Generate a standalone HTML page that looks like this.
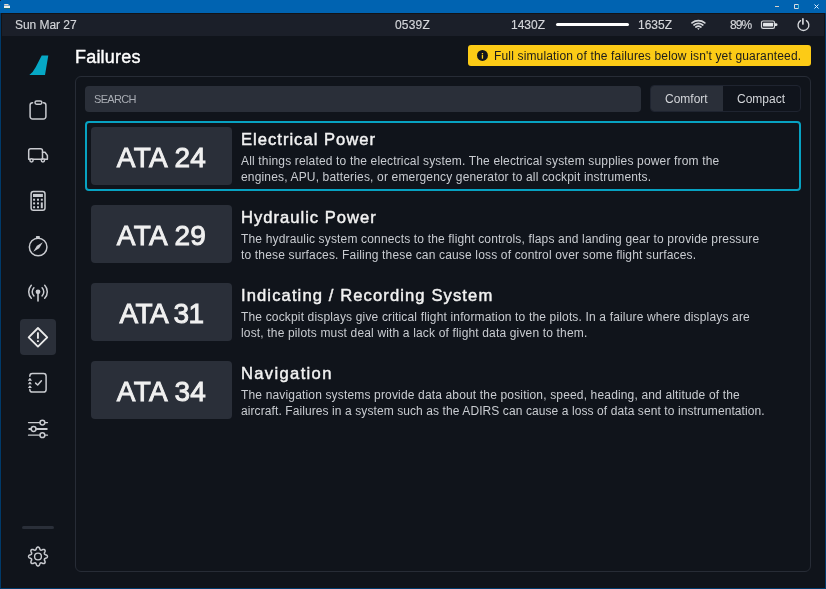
<!DOCTYPE html>
<html><head><meta charset="utf-8">
<style>
*{margin:0;padding:0;box-sizing:border-box}
html,body{width:826px;height:589px;overflow:hidden;background:#003a6a;font-family:"Liberation Sans",sans-serif}
.abs{position:absolute}
.st,#title,#banner span,#search span,#seg span,.ata,.ttl,.dsc{will-change:transform}
#tb{position:absolute;left:0;top:0;width:826px;height:13px;background:#0063b1}
#frame{position:absolute;left:1px;top:13px;width:824px;height:575px;background:#121317}
#app{position:absolute;left:2px;top:14px;width:822px;height:573px;background:#10141b}
#status{position:absolute;left:2px;top:14px;width:822px;height:22px;background:#1b1f29}
.st{position:absolute;top:14px;height:23px;line-height:23px;font-size:12px;color:#d4d6da;-webkit-text-stroke:0.15px #d4d6da;white-space:nowrap}
.ico{position:absolute;overflow:visible}
#title{position:absolute;left:75px;top:45px;font-size:18px;line-height:24px;color:#fff;-webkit-text-stroke:0.4px #fff;letter-spacing:0.2px;white-space:nowrap}
#banner{position:absolute;left:468px;top:45px;width:343px;height:21px;background:#fccb16;border-radius:3px}
#banner span{position:absolute;left:25.5px;top:0;line-height:22.5px;font-size:12px;color:#1b1b1b;letter-spacing:0.16px;white-space:nowrap}
#panel{position:absolute;left:75px;top:76px;width:736px;height:496px;border:1px solid #272c36;border-radius:6px}
#search{position:absolute;left:85px;top:86px;width:556px;height:26px;background:#2a2f39;border-radius:4px}
#search span{position:absolute;left:8.5px;top:0;line-height:26px;font-size:11px;color:#a9adb4;letter-spacing:-0.7px;white-space:nowrap}
#seg{position:absolute;left:650px;top:85px;width:150.5px;height:26.5px;border:1px solid #1f2430;border-radius:4px;background:#10141c;overflow:hidden}
#seg .c1{position:absolute;left:0;top:0;width:72px;height:100%;background:#2a2f39}
#seg span{position:absolute;top:0;line-height:27px;font-size:12px;color:#d3d5d9;white-space:nowrap}
.card{position:absolute;left:85px;width:715.5px;height:70px;border-radius:4px}
.card.sel{border:2px solid #07a2c2}
.ata{position:absolute;left:91px;width:141px;height:57.7px;background:#2a2f39;border-radius:4px;color:#f0f0f0;font-size:28px;font-weight:400;-webkit-text-stroke:0.9px #f0f0f0;letter-spacing:0.3px;text-align:center;line-height:61px;overflow:hidden;white-space:nowrap}
.ttl{position:absolute;left:240.5px;font-size:16.6px;font-weight:400;-webkit-text-stroke:0.45px #f2f2f2;letter-spacing:1.0px;color:#f2f2f2;white-space:nowrap;line-height:20px}
.dsc{position:absolute;left:241px;font-size:12px;color:#c9ccd1;letter-spacing:0.16px;white-space:nowrap;line-height:16px}
</style></head>
<body>
<div id="tb"></div>
<!-- title bar icons -->
<svg class="ico" style="left:0;top:0" width="826" height="13">
  <rect x="0" y="0" width="1" height="1" fill="#1a2030"/><rect x="4.2" y="4" width="4.3" height="1.2" fill="#e8ddd0"/><rect x="4" y="5.6" width="6" height="2.4" fill="#f2eee8"/><rect x="4" y="8" width="6" height="0.7" fill="#1f6a58"/>
  <line x1="775" y1="6.5" x2="779" y2="6.5" stroke="#d8d0c8" stroke-width="1"/>
  <path d="M798.5,4.5 H794.5 V8.5 H798.5" fill="none" stroke="#d8dde2" stroke-width="1"/><path d="M798.5,5 V8" stroke="#40c8d8" stroke-width="1"/>
  <path d="M814.5 4.5 L818.5 8.5 M818.5 4.5 L814.5 8.5" stroke="#e0f0ff" stroke-width="1"/>
</svg>
<div id="frame"></div>
<div id="app"></div>
<div id="status"></div>
<div class="st" style="left:15px;letter-spacing:-0.05px">Sun Mar 27</div>
<div class="st" style="left:394.5px;letter-spacing:0.2px">0539Z</div>
<div class="st" style="left:510.5px">1430Z</div>
<div class="abs" style="left:555.5px;top:23px;width:73.5px;height:3px;border-radius:2px;background:#fff"></div>
<div class="st" style="left:637.5px">1635Z</div>
<div class="st" style="left:729.5px;letter-spacing:-0.9px">89%</div>

<div id="title">Failures</div>
<div id="banner"><span>Full simulation of the failures below isn't yet guaranteed.</span></div>
<div id="panel"></div>
<div id="search"><span>SEARCH</span></div>
<div id="seg"><div class="c1"></div><span style="left:14px">Comfort</span><span style="left:86px">Compact</span></div>

<div class="card sel" style="top:121px"></div>
<div class="ata" style="top:127px">ATA 24</div>
<div class="ttl" style="top:129.5px">Electrical Power</div>
<div class="dsc" style="top:153px">All things related to the electrical system. The electrical system supplies power from the</div>
<div class="dsc" style="top:169px">engines, APU, batteries, or emergency generator to all cockpit instruments.</div>

<div class="ata" style="top:205px">ATA 29</div>
<div class="ttl" style="top:207.5px">Hydraulic Power</div>
<div class="dsc" style="top:231px">The hydraulic system connects to the flight controls, flaps and landing gear to provide pressure</div>
<div class="dsc" style="top:247px">to these surfaces. Failing these can cause loss of control over some flight surfaces.</div>

<div class="ata" style="top:283px;letter-spacing:-0.6px">ATA 31</div>
<div class="ttl" style="top:285.5px;letter-spacing:1.1px">Indicating / Recording System</div>
<div class="dsc" style="top:309px">The cockpit displays give critical flight information to the pilots. In a failure where displays are</div>
<div class="dsc" style="top:325px">lost, the pilots must deal with a lack of flight data given to them.</div>

<div class="ata" style="top:361px">ATA 34</div>
<div class="ttl" style="top:363.5px;letter-spacing:1.33px">Navigation</div>
<div class="dsc" style="top:387px">The navigation systems provide data about the position, speed, heading, and altitude of the</div>
<div class="dsc" style="top:403px;letter-spacing:0.09px">aircraft. Failures in a system such as the ADIRS can cause a loss of data sent to instrumentation.</div>

<!-- sidebar -->
<div class="abs" style="left:20px;top:319px;width:36px;height:36px;border-radius:4px;background:#2a2f39"></div>
<div class="abs" style="left:22px;top:526px;width:32px;height:3px;border-radius:2px;background:#2a2f39"></div>
<svg class="ico" style="left:0;top:0" width="826" height="589" viewBox="0 0 826 589">
<g fill="none" stroke="#c9cbd0" stroke-width="1.5" stroke-linecap="round" stroke-linejoin="round">
 <!-- clipboard -->
 <path d="M32.6,102.7 H32.6 a2.5,2.5 0 0 0 -2.5,2.5 V116.5 a2.5,2.5 0 0 0 2.5,2.5 H43.4 a2.5,2.5 0 0 0 2.5,-2.5 V105.2 a2.5,2.5 0 0 0 -2.5,-2.5 H43.4"/>
 <rect x="35" y="101" width="6.9" height="3.2" rx="1.6"/>
 <!-- truck -->
 <path d="M29.9,159.3 H28.7 V150.7 a2,2 0 0 1 2,-2 H40.5 a2,2 0 0 1 2,2 V159.3"/>
 <path d="M42.5,152.3 H45 L47.4,155.5 V159.3 H44.5"/>
 <path d="M33.1,159.3 H41.3"/>
 <circle cx="31.5" cy="160.3" r="1.6"/>
 <circle cx="42.9" cy="160.3" r="1.6"/>
 <!-- calculator -->
 <rect x="31.1" y="191.6" width="13.9" height="18.6" rx="2.3"/>
 <!-- compass -->
 <circle cx="38.15" cy="247" r="8.8"/>
 <!-- antenna arcs -->
 <path d="M33.9,287.7 A5.8,5.8 0 0 0 33.9,295.9 M42.1,287.7 A5.8,5.8 0 0 1 42.1,295.9"/>
 <path d="M31.3,285.35 A9.3,9.3 0 0 0 31.3,298.25 M44.7,285.35 A9.3,9.3 0 0 1 44.7,298.25"/>
 <path d="M38,292 V301" stroke-width="1.6"/>
 <!-- checklist -->
 <path d="M29.8,376.2 V376.2 a2.6,2.6 0 0 1 2.6,-2.6 H43.5 a2.6,2.6 0 0 1 2.6,2.6 V389.5 a2.6,2.6 0 0 1 -2.6,2.6 H32.4 a2.6,2.6 0 0 1 -2.6,-2.6"/>
 <path d="M35.6,383.1 L37.7,385 L41.4,380.8" stroke-width="1.5"/>
 <!-- sliders -->
 <path d="M28.5,422.6 H39.9 M44.9,422.6 H47.5 M28.5,435.2 H39.9 M44.9,435.2 H47.5" stroke-width="1.3"/><path d="M28.5,429 H31.1 M36.1,429 H47.5" stroke-width="1.9" stroke-linecap="butt"/>
 <circle cx="42.4" cy="422.6" r="2.4"/>
 <circle cx="33.6" cy="429" r="2.4"/>
 <circle cx="42.4" cy="435.2" r="2.4"/>
 <!-- gear -->
 <path d="M38.00,547.05 L38.30,547.08 L38.59,547.18 L38.87,547.34 L39.13,547.56 L39.37,547.86 L39.57,548.27 L39.70,548.88 L39.87,549.22 L40.03,549.50 L40.20,549.73 L40.38,549.90 L40.56,550.03 L40.76,550.12 L40.99,550.16 L41.23,550.15 L41.51,550.11 L41.82,550.03 L42.19,549.90 L42.71,549.57 L43.14,549.42 L43.52,549.38 L43.87,549.41 L44.18,549.49 L44.45,549.63 L44.68,549.82 L44.87,550.05 L45.01,550.32 L45.09,550.63 L45.12,550.98 L45.08,551.36 L44.93,551.79 L44.60,552.31 L44.47,552.68 L44.39,552.99 L44.35,553.27 L44.34,553.51 L44.38,553.74 L44.47,553.94 L44.60,554.12 L44.77,554.30 L45.00,554.47 L45.28,554.63 L45.62,554.80 L46.23,554.93 L46.64,555.13 L46.94,555.37 L47.16,555.63 L47.32,555.91 L47.42,556.20 L47.45,556.50 L47.42,556.80 L47.32,557.09 L47.16,557.37 L46.94,557.63 L46.64,557.87 L46.23,558.07 L45.62,558.20 L45.28,558.37 L45.00,558.53 L44.77,558.70 L44.60,558.88 L44.47,559.06 L44.38,559.26 L44.34,559.49 L44.35,559.73 L44.39,560.01 L44.47,560.32 L44.60,560.69 L44.93,561.21 L45.08,561.64 L45.12,562.02 L45.09,562.37 L45.01,562.68 L44.87,562.95 L44.68,563.18 L44.45,563.37 L44.18,563.51 L43.87,563.59 L43.52,563.62 L43.14,563.58 L42.71,563.43 L42.19,563.10 L41.82,562.97 L41.51,562.89 L41.23,562.85 L40.99,562.84 L40.76,562.88 L40.56,562.97 L40.38,563.10 L40.20,563.27 L40.03,563.50 L39.87,563.78 L39.70,564.12 L39.57,564.73 L39.37,565.14 L39.13,565.44 L38.87,565.66 L38.59,565.82 L38.30,565.92 L38.00,565.95 L37.70,565.92 L37.41,565.82 L37.13,565.66 L36.87,565.44 L36.63,565.14 L36.43,564.73 L36.30,564.12 L36.13,563.78 L35.97,563.50 L35.80,563.27 L35.62,563.10 L35.44,562.97 L35.24,562.88 L35.01,562.84 L34.77,562.85 L34.49,562.89 L34.18,562.97 L33.81,563.10 L33.29,563.43 L32.86,563.58 L32.48,563.62 L32.13,563.59 L31.82,563.51 L31.55,563.37 L31.32,563.18 L31.13,562.95 L30.99,562.68 L30.91,562.37 L30.88,562.02 L30.92,561.64 L31.07,561.21 L31.40,560.69 L31.53,560.32 L31.61,560.01 L31.65,559.73 L31.66,559.49 L31.62,559.26 L31.53,559.06 L31.40,558.88 L31.23,558.70 L31.00,558.53 L30.72,558.37 L30.38,558.20 L29.77,558.07 L29.36,557.87 L29.06,557.63 L28.84,557.37 L28.68,557.09 L28.58,556.80 L28.55,556.50 L28.58,556.20 L28.68,555.91 L28.84,555.63 L29.06,555.37 L29.36,555.13 L29.77,554.93 L30.38,554.80 L30.72,554.63 L31.00,554.47 L31.23,554.30 L31.40,554.12 L31.53,553.94 L31.62,553.74 L31.66,553.51 L31.65,553.27 L31.61,552.99 L31.53,552.68 L31.40,552.31 L31.07,551.79 L30.92,551.36 L30.88,550.98 L30.91,550.63 L30.99,550.32 L31.13,550.05 L31.32,549.82 L31.55,549.63 L31.82,549.49 L32.13,549.41 L32.48,549.38 L32.86,549.42 L33.29,549.57 L33.81,549.90 L34.18,550.03 L34.49,550.11 L34.77,550.15 L35.01,550.16 L35.24,550.12 L35.44,550.03 L35.62,549.90 L35.80,549.73 L35.97,549.50 L36.13,549.22 L36.30,548.88 L36.43,548.27 L36.63,547.86 L36.87,547.56 L37.13,547.34 L37.41,547.18 L37.70,547.08Z" stroke-width="1.5"/>
 <circle cx="38" cy="556.5" r="3.4" stroke-width="1.4"/>
 <!-- diamond -->
 <path d="M37.95,328 L47.25,337.3 L37.95,346.6 L28.65,337.3 Z" stroke="#ebebeb" stroke-width="1.8"/>
</g>
<g fill="#c9cbd0">
 <path d="M41.7,55.5 L48.3,55.5 L45,75 L29.3,75 Q33.2,72.2 35.8,67 Z" fill="#06a8c5"/>
 <!-- calc screen and keys -->
 <rect x="33" y="193.9" width="9.9" height="3.1"/>
 <rect x="33.1" y="198.7" width="2" height="2"/><rect x="37" y="198.7" width="2" height="2"/><rect x="40.8" y="198.7" width="2" height="2"/>
 <rect x="33.1" y="202.4" width="2" height="2"/><rect x="37" y="202.4" width="2" height="2"/>
 <rect x="33.1" y="206.2" width="2" height="2"/><rect x="37" y="206.2" width="2" height="2"/>
 <rect x="40.8" y="202.4" width="2" height="5.8"/>
 <!-- compass knob + needle -->
 <rect x="35.9" y="236.1" width="4" height="2.2" rx="0.8"/>
 <path d="M33.3,251.7 L36.9,245.85 L42.8,242.3 L39.2,248.15 Z"/>
 <!-- antenna dot -->
 <circle cx="38" cy="291.8" r="2.4"/>
 <!-- checklist rings -->
 <path d="M27.8,380.7 Q28.4,380 29.2,378.6 Q29.9,377.6 30.6,378.6 Q31.4,380 32,380.7 Z M27.8,384.3 Q28.4,383.6 29.2,382.2 Q29.9,381.2 30.6,382.2 Q31.4,383.6 32,384.3 Z M27.8,388 Q28.4,387.3 29.2,385.9 Q29.9,384.9 30.6,385.9 Q31.4,387.3 32,388 Z"/>
 <!-- exclamation -->
 <rect x="37" y="332.3" width="1.9" height="6.4" rx="0.5" fill="#ebebeb"/>
 <rect x="37" y="340.3" width="1.9" height="1.8" rx="0.5" fill="#ebebeb"/>
</g>
<!-- status icons -->
<g fill="none" stroke="#d6d8dc" stroke-linecap="round">
 <path d="M692,22.9 A10.3,10.3 0 0 1 704.8,22.9" stroke-width="1.7"/>
 <path d="M694,25 A7.44,7.44 0 0 1 702.8,25" stroke-width="1.7"/>
 <path d="M695.9,27 A4.72,4.72 0 0 1 700.9,27" stroke-width="1.7"/>
 <rect x="761.5" y="21" width="13" height="7.3" rx="1.6" stroke-width="1.2"/>
 <path d="M800.5,20.6 A5.4,5.4 0 1 0 806.4,20.6" stroke-width="1.35"/>
 <path d="M802.9,18.9 V24" stroke-width="1.7"/>
</g>
<g fill="#e2e4e8">
 <path d="M697.2,28.2 L699.6,28.2 L698.4,29.9 Z"/>
 <rect x="763" y="22.8" width="10.1" height="3.7" rx="0.4"/>
 <path d="M775,23.3 H776 a1.5,1.35 0 0 1 0,2.7 H775 Z"/>
 <circle cx="482.45" cy="55.45" r="5.45" fill="#12151c"/>
 <rect x="481.8" y="53" width="1.3" height="1.3" fill="#fccb16"/>
 <rect x="481.8" y="54.9" width="1.3" height="3.8" fill="#fccb16"/>
</g>
</svg>
</body></html>
